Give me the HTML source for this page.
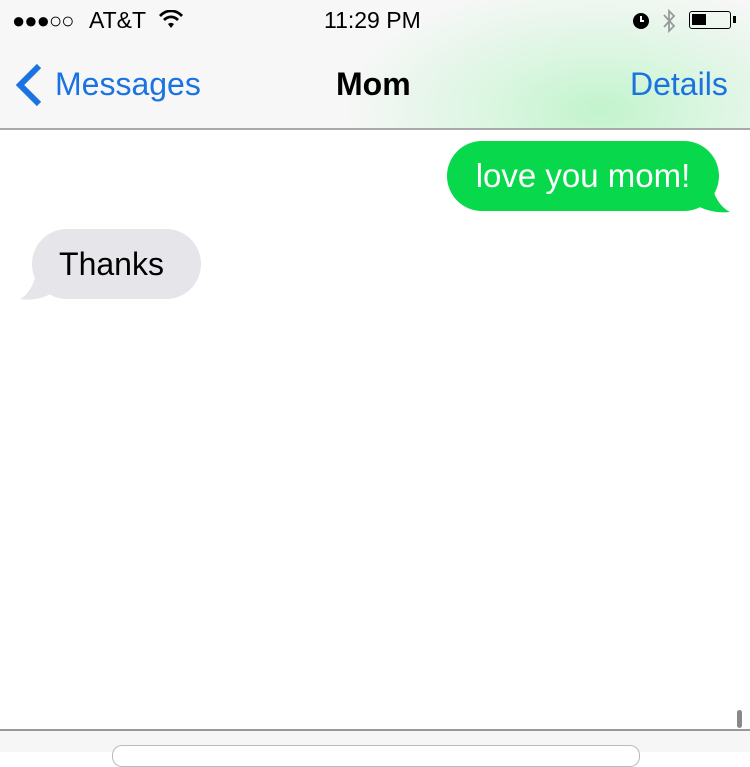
<!DOCTYPE html>
<html><head><style>
body{margin:0;width:750px;height:750px;overflow:hidden;background:#fff;font-family:"Liberation Sans",sans-serif;position:relative}
.hdr{position:absolute;left:0;top:0;width:750px;height:128px;background:radial-gradient(ellipse 260px 130px at 600px 110px,#c2f4cc 0%,#dcf6e2 45%,rgba(246,246,246,0) 100%),#f7f7f7;border-bottom:2px solid #a9a9a9}
.t{position:absolute;white-space:nowrap}
.b{position:absolute;border-radius:35px;font-size:32px;line-height:70px;height:70px}
</style></head><body>
<div class="hdr"></div>
<div class="t" style="left:12px;top:8px;font-size:22px;letter-spacing:-1px">●●●○○</div>
<div class="t" style="left:89px;top:7px;font-size:23px">AT&amp;T</div>
<svg class="t" style="left:158px;top:10px" width="26" height="20" viewBox="0 0 26 20"><path d="M13 18l3-4a5 5 0 0 0-6 0z M5 9a11 11 0 0 1 16 0l-2 2a8 8 0 0 0-12 0z M1 5a16 16 0 0 1 24 0l-2 2a13 13 0 0 0-20 0z" fill="#000"/></svg>
<div class="t" style="left:324px;top:7px;font-size:23px">11:29 PM</div>
<svg class="t" style="left:630px;top:9px" width="22" height="22"><circle cx="11" cy="12" r="8" fill="#000"/><path d="M11 7v5h3" stroke="#fff" stroke-width="2" fill="none"/></svg>
<svg class="t" style="left:662px;top:8px" width="14" height="26"><path d="M2 7l10 11-5 5V3l5 5L2 19" stroke="#999" stroke-width="1.8" fill="none"/></svg>
<div class="t" style="left:689px;top:11px;width:42px;height:18px;border:1.5px solid #000;border-radius:3px;box-sizing:border-box"><div style="margin:2px;width:14px;height:11px;background:#000"></div></div>
<div class="t" style="left:733px;top:16px;width:3px;height:7px;background:#000"></div>
<svg class="t" style="left:14px;top:63px" width="30" height="44"><path d="M25 3L6 22l19 19" stroke="#1a73e0" stroke-width="6" fill="none"/></svg>
<div class="t" style="left:55px;top:66px;font-size:32px;color:#1a73e0">Messages</div>
<div class="t" style="left:336px;top:66px;font-size:32px;font-weight:bold">Mom</div>
<div class="t" style="left:630px;top:66px;font-size:32px;color:#1a73e0">Details</div>
<svg class="t" style="left:690px;top:170px" width="42" height="44"><path d="M0 0h20c0 20 8 36 20 42C20 44 5 36 0 30z" fill="#08d94c"/></svg>
<div class="b" style="left:447px;top:141px;width:272px;background:#08d94c;color:#fff;text-align:center;font-size:33px">love you mom!</div>
<svg class="t" style="left:18px;top:258px" width="42" height="44"><path d="M40 0H20c0 20-8 36-18 41 18 3 33-5 38-11z" fill="#e5e5ea"/></svg>
<div class="b" style="left:32px;top:229px;width:169px;background:#e5e5ea;color:#000;text-align:center;text-indent:-10px">Thanks</div>
<div class="t" style="left:737px;top:710px;width:5px;height:18px;background:#888;border-radius:3px"></div>
<div class="t" style="left:0;top:729px;width:750px;height:21px;background:#f6f6f6;border-top:2px solid #999"></div>
<div class="t" style="left:112px;top:745px;width:526px;height:20px;border:1.5px solid #bbb;border-radius:10px;background:#fff"></div>
</body></html>
